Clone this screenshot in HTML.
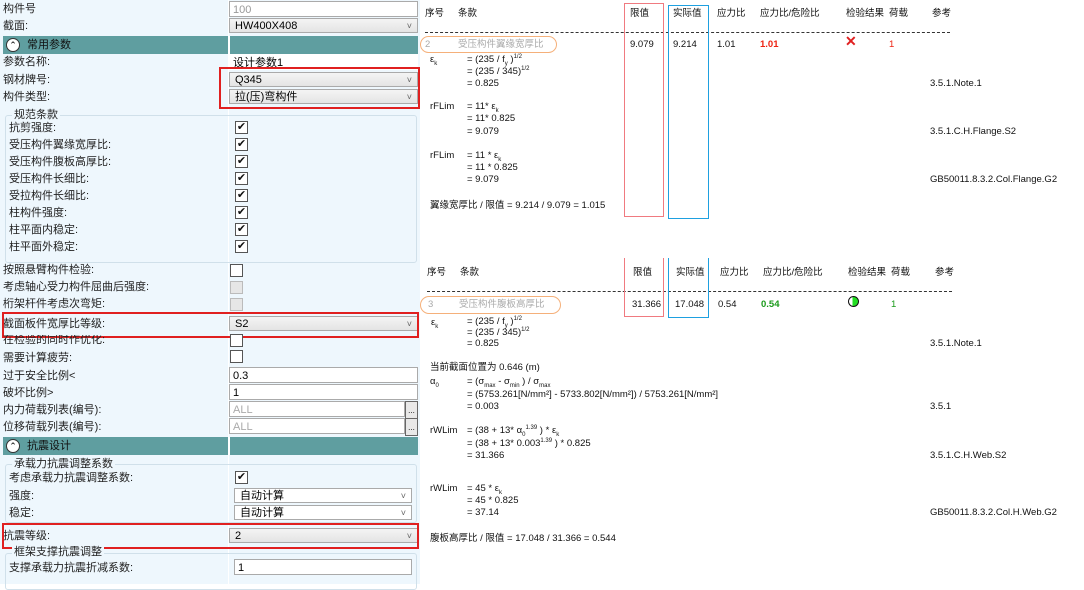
<!DOCTYPE html>
<html><head><meta charset="utf-8"><style>
body{margin:0;width:1084px;height:584px;overflow:hidden;background:#fff;position:relative;font-family:"Liberation Sans","Noto Sans CJK SC",sans-serif;}
.a{position:absolute;white-space:nowrap;}
.L{font-size:11px;line-height:16px;color:#222;}
.R{font-size:9.5px;line-height:11px;color:#111;}
sub,sup{line-height:0;font-size:6px;}
.cb{position:absolute;width:11px;height:11px;border:1px solid #555;background:#fff;font-size:11px;line-height:11px;text-align:center;color:#111;}
.cbd{position:absolute;width:11px;height:11px;border:1px solid #bbb;background:#e6e6e6;}
.sel{position:absolute;height:15px;border:1px solid #aaa;background:linear-gradient(#f4f4f4,#e4e4e4);font-size:11px;line-height:15px;padding-left:5px;box-sizing:border-box;}
.sel:after{content:"˅";position:absolute;right:5px;top:0;font-size:9px;color:#666;}
.sel2{background:#fff;}
.inp{position:absolute;height:16px;border:1px solid #aaa;background:#fff;font-size:11px;line-height:16px;padding-left:3px;box-sizing:border-box;}
.hdr{position:absolute;left:3px;width:415px;height:18px;background:#5f9ea0;}
.hdr .c{position:absolute;left:3px;top:2px;width:12px;height:12px;border:1px solid #333;border-radius:50%;background:#fff;font-size:9px;line-height:12px;text-align:center;}
.hdr .t{position:absolute;left:24px;top:1px;font-size:11px;line-height:16px;color:#111;}
.red{position:absolute;border:2px solid #e02020;}
.dash{position:absolute;left:425px;width:525px;border-top:1px dashed #333;}
</style></head><body>
<div class="a" style="left:0;top:0;width:420px;height:584px;background:#eef7fd;"></div>
<div class="a" style="left:228px;top:0;width:1px;height:584px;background:#fff;"></div>
<div class="a L" style="left:3px;top:1px">构件号</div>
<div class="inp" style="left:229px;top:1px;width:189px;color:#999;">100</div>
<div class="a L" style="left:3px;top:18px">截面:</div>
<div class="sel" style="left:229px;top:18px;width:189px;">HW400X408</div>
<div class="hdr" style="top:36px"><div class="c">⌃</div><div class="t">常用参数</div></div>
<div class="a" style="left:228px;top:36px;width:2px;height:18px;background:#fff"></div>
<div class="a L" style="left:3px;top:54px">参数名称:</div>
<div class="inp" style="left:229px;top:54px;width:189px;border-color:#fff">设计参数1</div>
<div class="a L" style="left:3px;top:72px">钢材牌号:</div>
<div class="sel" style="left:229px;top:72px;width:189px;">Q345</div>
<div class="a L" style="left:3px;top:89px">构件类型:</div>
<div class="sel" style="left:229px;top:89px;width:189px;">拉(压)弯构件</div>
<div class="red" style="left:219px;top:67px;width:197px;height:38px"></div>
<div class="a" style="left:5px;top:115px;width:410px;height:146px;border:1px solid #d0e0ea;border-radius:3px;"></div>
<div class="a L" style="left:12px;top:107px;background:#eef7fd;padding:0 2px">规范条款</div>
<div class="a L" style="left:9px;top:120px">抗剪强度:</div>
<div class="a L" style="left:9px;top:137px">受压构件翼缘宽厚比:</div>
<div class="a L" style="left:9px;top:154px">受压构件腹板高厚比:</div>
<div class="a L" style="left:9px;top:171px">受压构件长细比:</div>
<div class="a L" style="left:9px;top:188px">受拉构件长细比:</div>
<div class="a L" style="left:9px;top:205px">柱构件强度:</div>
<div class="a L" style="left:9px;top:222px">柱平面内稳定:</div>
<div class="a L" style="left:9px;top:239px">柱平面外稳定:</div>
<div class="cb" style="left:235px;top:121px">✔</div>
<div class="cb" style="left:235px;top:138px">✔</div>
<div class="cb" style="left:235px;top:155px">✔</div>
<div class="cb" style="left:235px;top:172px">✔</div>
<div class="cb" style="left:235px;top:189px">✔</div>
<div class="cb" style="left:235px;top:206px">✔</div>
<div class="cb" style="left:235px;top:223px">✔</div>
<div class="cb" style="left:235px;top:240px">✔</div>
<div class="a L" style="left:3px;top:262px">按照悬臂构件检验:</div>
<div class="cb" style="left:230px;top:264px"></div>
<div class="a L" style="left:3px;top:279px">考虑轴心受力构件屈曲后强度:</div>
<div class="cbd" style="left:230px;top:281px"></div>
<div class="a L" style="left:3px;top:296px">桁架杆件考虑次弯矩:</div>
<div class="cbd" style="left:230px;top:298px"></div>
<div class="a L" style="left:3px;top:316px">截面板件宽厚比等级:</div>
<div class="sel" style="left:229px;top:316px;width:189px;">S2</div>
<div class="red" style="left:2px;top:312px;width:413px;height:22px"></div>
<div class="a L" style="left:3px;top:335px;height:9px;overflow:hidden;line-height:11px">在检验的同时作优化:</div>
<div class="cb" style="left:230px;top:334px"></div>
<div class="a L" style="left:3px;top:350px">需要计算疲劳:</div>
<div class="cb" style="left:230px;top:350px"></div>
<div class="a L" style="left:3px;top:368px">过于安全比例&lt;</div>
<div class="inp" style="left:229px;top:367px;width:189px;">0.3</div>
<div class="a L" style="left:3px;top:385px">破坏比例&gt;</div>
<div class="inp" style="left:229px;top:384px;width:189px;">1</div>
<div class="a L" style="left:3px;top:402px">内力荷载列表(编号):</div>
<div class="inp" style="left:229px;top:401px;width:176px;color:#aaa;">ALL</div>
<div class="a" style="left:405px;top:401px;width:11px;height:16px;border:1px solid #666;background:#e8e8e8;font-size:8px;line-height:18px;text-align:center">...</div>
<div class="a L" style="left:3px;top:419px">位移荷载列表(编号):</div>
<div class="inp" style="left:229px;top:418px;width:176px;color:#aaa;">ALL</div>
<div class="a" style="left:405px;top:418px;width:11px;height:16px;border:1px solid #666;background:#e8e8e8;font-size:8px;line-height:18px;text-align:center">...</div>
<div class="hdr" style="top:437px"><div class="c">⌃</div><div class="t">抗震设计</div></div>
<div class="a" style="left:228px;top:437px;width:2px;height:18px;background:#fff"></div>
<div class="a" style="left:5px;top:464px;width:410px;height:57px;border:1px solid #d0e0ea;border-radius:3px;"></div>
<div class="a L" style="left:12px;top:456px;background:#eef7fd;padding:0 2px">承载力抗震调整系数</div>
<div class="a L" style="left:9px;top:470px">考虑承载力抗震调整系数:</div>
<div class="cb" style="left:235px;top:471px">✔</div>
<div class="a L" style="left:9px;top:488px">强度:</div>
<div class="sel sel2" style="left:234px;top:488px;width:178px;">自动计算</div>
<div class="a L" style="left:9px;top:505px">稳定:</div>
<div class="sel sel2" style="left:234px;top:505px;width:178px;">自动计算</div>
<div class="a L" style="left:3px;top:528px">抗震等级:</div>
<div class="sel" style="left:229px;top:528px;width:189px;">2</div>
<div class="red" style="left:2px;top:523px;width:413px;height:22px"></div>
<div class="a" style="left:5px;top:553px;width:410px;height:35px;border:1px solid #d0e0ea;border-radius:3px;"></div>
<div class="a L" style="left:12px;top:544px;background:#eef7fd;padding:0 2px">框架支撑抗震调整</div>
<div class="a L" style="left:9px;top:560px">支撑承载力抗震折减系数:</div>
<div class="inp" style="left:234px;top:559px;width:178px;">1</div>

<div class="a R" style="left:425px;top:8px">序号</div>
<div class="a R" style="left:458px;top:8px">条款</div>
<div class="a R" style="left:630px;top:8px">限值</div>
<div class="a R" style="left:673px;top:8px">实际值</div>
<div class="a R" style="left:717px;top:8px">应力比</div>
<div class="a R" style="left:760px;top:8px">应力比/危险比</div>
<div class="a R" style="left:846px;top:8px">检验结果</div>
<div class="a R" style="left:889px;top:8px">荷载</div>
<div class="a R" style="left:932px;top:8px">参考</div>
<div class="dash" style="top:32px"></div>
<div class="a" style="left:420px;top:36px;width:137px;height:17px;border:1.5px solid #f5b07a;border-radius:10px;box-sizing:border-box"></div>
<div class="a R" style="left:425px;top:39px;color:#aaa">2</div>
<div class="a R" style="left:458px;top:39px;color:#aaa">受压构件翼缘宽厚比</div>
<div class="a R" style="left:630px;top:39px">9.079</div>
<div class="a R" style="left:673px;top:39px">9.214</div>
<div class="a R" style="left:717px;top:39px">1.01</div>
<div class="a R" style="left:760px;top:39px;color:#e21;font-weight:bold">1.01</div>
<div class="a" style="left:845px;top:33px;font-size:14px;color:#e02020;font-weight:bold">✕</div>
<div class="a R" style="left:889px;top:39px;color:#e21">1</div>
<div class="a R" style="left:430px;top:54px">ε<sub>k</sub></div>
<div class="a R" style="left:467px;top:54px">= (235 / f<sub>y</sub> )<sup>1/2</sup></div>
<div class="a R" style="left:467px;top:66px">= (235 / 345)<sup>1/2</sup></div>
<div class="a R" style="left:467px;top:78px">= 0.825</div>
<div class="a R" style="left:930px;top:78px">3.5.1.Note.1</div>
<div class="a R" style="left:430px;top:101px">rFLim</div>
<div class="a R" style="left:467px;top:101px">= 11* ε<sub>k</sub></div>
<div class="a R" style="left:467px;top:113px">= 11* 0.825</div>
<div class="a R" style="left:467px;top:126px">= 9.079</div>
<div class="a R" style="left:930px;top:126px">3.5.1.C.H.Flange.S2</div>
<div class="a R" style="left:430px;top:150px">rFLim</div>
<div class="a R" style="left:467px;top:150px">= 11 * ε<sub>k</sub></div>
<div class="a R" style="left:467px;top:162px">= 11 * 0.825</div>
<div class="a R" style="left:467px;top:174px">= 9.079</div>
<div class="a R" style="left:930px;top:174px">GB50011.8.3.2.Col.Flange.G2</div>
<div class="a R" style="left:430px;top:200px">翼缘宽厚比 / 限值 = 9.214 / 9.079 = 1.015</div>
<div class="a" style="left:624px;top:3px;width:38px;height:212px;border:1.5px solid #f07a80;"></div>
<div class="a" style="left:668px;top:5px;width:39px;height:212px;border:1.5px solid #1ea0e0;"></div>

<div class="a R" style="left:427px;top:267px">序号</div>
<div class="a R" style="left:460px;top:267px">条款</div>
<div class="a R" style="left:633px;top:267px">限值</div>
<div class="a R" style="left:676px;top:267px">实际值</div>
<div class="a R" style="left:720px;top:267px">应力比</div>
<div class="a R" style="left:763px;top:267px">应力比/危险比</div>
<div class="a R" style="left:848px;top:267px">检验结果</div>
<div class="a R" style="left:891px;top:267px">荷载</div>
<div class="a R" style="left:935px;top:267px">参考</div>
<div class="dash" style="left:427px;top:291px"></div>
<div class="a" style="left:420px;top:296px;width:141px;height:18px;border:1.5px solid #f5b07a;border-radius:10px;box-sizing:border-box"></div>
<div class="a R" style="left:428px;top:299px;color:#aaa">3</div>
<div class="a R" style="left:459px;top:299px;color:#aaa">受压构件腹板高厚比</div>
<div class="a R" style="left:632px;top:299px">31.366</div>
<div class="a R" style="left:675px;top:299px">17.048</div>
<div class="a R" style="left:718px;top:299px">0.54</div>
<div class="a R" style="left:761px;top:299px;color:#1a9a1a;font-weight:bold">0.54</div>
<div class="a" style="left:848px;top:296px;width:9px;height:9px;border:1px solid #111;border-radius:50%;background:linear-gradient(90deg,#fff 40%,#22dd22 40%)"></div>
<div class="a R" style="left:891px;top:299px;color:#1a9a1a">1</div>
<div class="a R" style="left:431px;top:317px">ε<sub>k</sub></div>
<div class="a R" style="left:467px;top:316px">= (235 / f<sub>y</sub> )<sup>1/2</sup></div>
<div class="a R" style="left:467px;top:327px">= (235 / 345)<sup>1/2</sup></div>
<div class="a R" style="left:467px;top:338px">= 0.825</div>
<div class="a R" style="left:930px;top:338px">3.5.1.Note.1</div>
<div class="a R" style="left:430px;top:362px">当前截面位置为 0.646 (m)</div>
<div class="a R" style="left:430px;top:376px">α<sub>0</sub></div>
<div class="a R" style="left:467px;top:376px">= (σ<sub>max</sub> - σ<sub>min</sub> ) / σ<sub>max</sub></div>
<div class="a R" style="left:467px;top:389px">= (5753.261[N/mm²] - 5733.802[N/mm²]) / 5753.261[N/mm²]</div>
<div class="a R" style="left:467px;top:401px">= 0.003</div>
<div class="a R" style="left:930px;top:401px">3.5.1</div>
<div class="a R" style="left:430px;top:425px">rWLim</div>
<div class="a R" style="left:467px;top:425px">= (38 + 13* α<sub>0</sub><sup>1.39</sup> ) * ε<sub>k</sub></div>
<div class="a R" style="left:467px;top:438px">= (38 + 13* 0.003<sup>1.39</sup> ) * 0.825</div>
<div class="a R" style="left:467px;top:450px">= 31.366</div>
<div class="a R" style="left:930px;top:450px">3.5.1.C.H.Web.S2</div>
<div class="a R" style="left:430px;top:483px">rWLim</div>
<div class="a R" style="left:467px;top:483px">= 45 * ε<sub>k</sub></div>
<div class="a R" style="left:467px;top:495px">= 45 * 0.825</div>
<div class="a R" style="left:467px;top:507px">= 37.14</div>
<div class="a R" style="left:930px;top:507px">GB50011.8.3.2.Col.H.Web.G2</div>
<div class="a R" style="left:430px;top:533px">腹板高厚比 / 限值 = 17.048 / 31.366 = 0.544</div>
<div class="a" style="left:624px;top:258px;width:38px;height:58px;border:1.5px solid #f07a80;border-top:none"></div>
<div class="a" style="left:668px;top:258px;width:39px;height:59px;border:1.5px solid #1ea0e0;border-top:none"></div>
</body></html>
